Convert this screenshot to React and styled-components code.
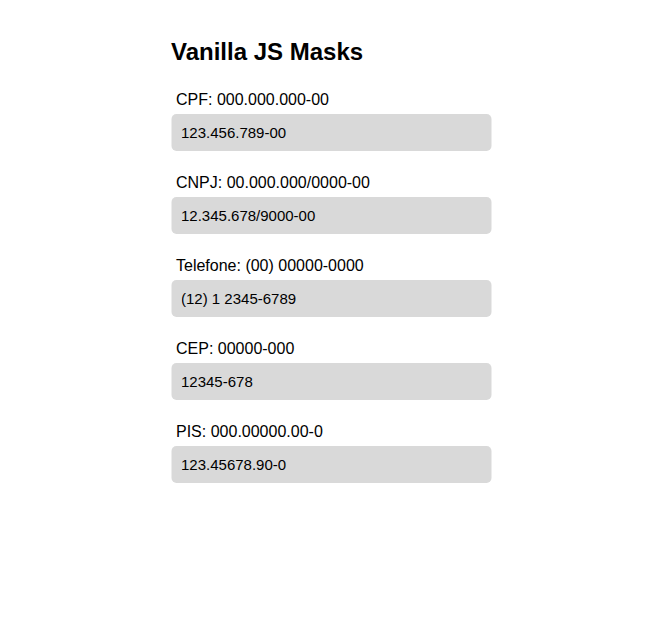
import React from 'react'
import styled, { createGlobalStyle } from 'styled-components'

const GlobalStyle = createGlobalStyle`
    body{
        margin: 0;
        background: #fff;
        font-family: "Liberation Sans", Arial, sans-serif;
        color: #000;
    }
`

const Page = styled.div`
    width: 320px;
    margin: 0 auto;
    padding-top: 38px;
    transform: translateX(-1.5px);
`

const Title = styled.h1`
    font-size: 24px;
    font-weight: bold;
    line-height: 28px;
    margin: 0 0 24px 0;
`

const Field = styled.div`
    display: flex;
    flex-direction: column;
    gap: 4px;
    margin-bottom: 22px;
`

const Label = styled.label`
    font-size: 16px;
    line-height: 20px;
    padding-left: 5px;
`

const Input = styled.input`
    box-sizing: border-box;
    width: 100%;
    height: 37px;
    border: none;
    border-radius: 5px;
    background: #d9d9d9;
    padding: 0 10px;
    font-family: "Liberation Sans", Arial, sans-serif;
    font-size: 15px;
    color: #000;
    outline: none;
`

const masks = [
    { label: 'CPF: 000.000.000-00', value: '123.456.789-00' },
    { label: 'CNPJ: 00.000.000/0000-00', value: '12.345.678/9000-00' },
    { label: 'Telefone: (00) 00000-0000', value: '(12) 1 2345-6789' },
    { label: 'CEP: 00000-000', value: '12345-678' },
    { label: 'PIS: 000.00000.00-0', value: '123.45678.90-0' },
]

const App = () => {
    return (
        <>
            <GlobalStyle />
            <Page>
                <Title>Vanilla JS Masks</Title>
                {masks.map((m) => (
                    <Field key={m.label}>
                        <Label>{m.label}</Label>
                        <Input defaultValue={m.value} />
                    </Field>
                ))}
            </Page>
        </>
    )
}

export default App
